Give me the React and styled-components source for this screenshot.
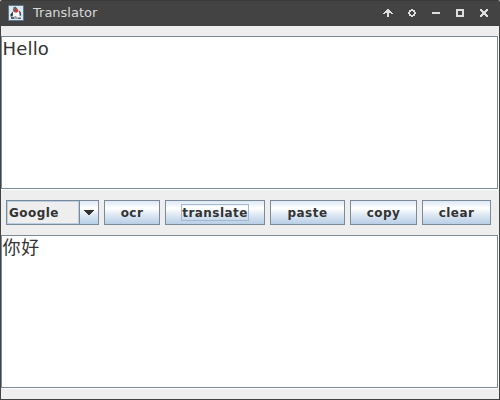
import React from "react";
import styled, { createGlobalStyle } from "styled-components";

const GlobalStyle = createGlobalStyle`
  *, *::before, *::after { box-sizing: border-box; }
  body { margin: 0; overflow: hidden; background: #ffffff; }
`;

const Window = styled.div`
  display: flex;
  flex-direction: column;
  width: 500px;
  height: 400px;
  background: #eeeeee;
  border: 1px solid #434343;
  border-top: 0;
  border-radius: 2px 2px 0 0;
  overflow: hidden;
  color: #333333;
  font-family: "DejaVu Sans", "Noto Sans CJK SC", sans-serif;
`;

const TitleBar = styled.header`
  display: flex;
  align-items: center;
  flex: 0 0 26px;
  padding: 0 11px 0 7px;
  background: #434343;
  box-shadow: inset 0 1px #3b3b3b;
`;

const Title = styled.h1`
  flex: 1;
  margin: 0 0 0 9px;
  color: #d8d8d8;
  font-size: 13px;
  font-weight: 400;
  line-height: 16px;
`;

const WindowControls = styled.div`
  display: flex;
  gap: 16px;
  svg { display: block; overflow: visible; }
`;

const TextPane = styled.section`
  flex: 0 0 154px;
  margin-top: 10px;
  padding: 0 1px 1px 0;
  background: #ffffff;
`;

const TextSurface = styled.div`
  height: 153px;
  padding: 1px 0 0 0.6px;
  border: 1px solid #7a8a99;
  font-size: 18px;
  letter-spacing: ${(p) => p.$tracking}px;
  line-height: 22px;
`;

const Toolbar = styled.div`
  display: flex;
  flex: 0 0 25px;
  gap: 5px;
  margin-top: 10px;
  padding-left: 5px;
  font-size: 12px;
  font-weight: 700;
`;

const metalGradient = "linear-gradient(#dde8f3 0%, #ffffff 30%, #ffffff 33%, #dde8f3 60%, #b8cfe5 100%)";

const EngineSelect = styled.div`
  display: flex;
  width: 93px;
  height: 25px;
  border: 1px solid #7a8a99;
`;

const EngineName = styled.span`
  flex: 1;
  padding-left: 1px;
  border: 1px solid #b8cfe5;
  line-height: 22px;
  letter-spacing: 0.45px;
`;

const SelectArrow = styled.span`
  display: flex;
  align-items: center;
  justify-content: center;
  width: 19px;
  border-left: 1px solid #7a8a99;
  background: ${metalGradient};
`;

const Button = styled.button`
  display: flex;
  align-items: center;
  justify-content: center;
  width: ${(p) => p.$width}px;
  height: 25px;
  padding: 0;
  border: 1px solid #7a8a99;
  background: ${metalGradient};
  color: #333333;
  font: inherit;
`;

const ButtonLabel = styled.span`
  height: 17px;
  border: 1px solid ${(p) => (p.$focused ? "#a3b8cc" : "transparent")};
  line-height: 17px;
  letter-spacing: 0.45px;
`;

const actions = [
  { label: "ocr", width: 56 },
  { label: "translate", width: 100, focused: true },
  { label: "paste", width: 75 },
  { label: "copy", width: 67 },
  { label: "clear", width: 69 },
];

function DukeIcon() {
  return (
    <svg width="16" height="16" viewBox="0 0 16 16">
      <rect width="16" height="16" rx="0.5" fill="#587a94" />
      <rect x="1" y="1" width="14" height="14" fill="#dce8ef" />
      <path d="M6 2L7.5 1.7L9 3L11 6L12 9V13H5L4 10L5.5 6Z" fill="#f7f7f7" />
      <path d="M5.5 2.2L7.5 1.6L9 3.2L10.7 6.5L8 7.5L5.5 7L5 5Z" fill="#63686c" />
      <path d="M4.8 6.5L2.5 9.5L2.6 11.5H4.6L5 9Z" fill="#303941" />
      <path d="M10.8 5.5L12.7 7L13.3 10L11.8 11.5L11.4 8.5Z" fill="#465159" />
      <path d="M3 12H5.5L7.5 11.3L10 12.4H13V14H3Z" fill="#59656e" />
      <path d="M6 12.5H10V13.4H6Z" fill="#e5e8ea" />
      <circle cx="8.4" cy="5.8" r="1.7" fill="#e8292e" />
    </svg>
  );
}

function ControlIcon({ children }) {
  return (
    <svg width="8" height="8" viewBox="0 0 8 8" fill="#dedede" fillRule="evenodd" shapeRendering="crispEdges">
      {children}
    </svg>
  );
}

export default function App() {
  return (
    <>
      <GlobalStyle />
      <Window>
        <TitleBar>
          <DukeIcon />
          <Title>Translator</Title>
          <WindowControls>
            <ControlIcon>
              <path d="M3 0h2v1h1v1h1v1h1v1h1v1H7V4H5v4H3V4H1v1H-1V4H0V3h1V2h1V1h1z" />
            </ControlIcon>
            <ControlIcon>
              <path d="M3 0h2v1h2v2h1v2H7v2H5v1H3V7H1V5H0V3h1V1h2zM3 2v1H2v2h1v1h2V5h1V3H5V2z" />
            </ControlIcon>
            <ControlIcon><path d="M0 3h8v2H0z" /></ControlIcon>
            <ControlIcon><path d="M0 0h8v8H0zM2 2v4h4V2z" /></ControlIcon>
            <ControlIcon>
              <path d="M0 0h2v1h1v1h2V1h1V0h2v2H7v1H6v2h1v1h1v2H6V7H5V6H3v1H2v1H0V6h1V5h1V3H1V2H0z" />
            </ControlIcon>
          </WindowControls>
        </TitleBar>
        <TextPane><TextSurface $tracking={0.15}>Hello</TextSurface></TextPane>
        <Toolbar>
          <EngineSelect>
            <EngineName>Google</EngineName>
            <SelectArrow>
              <svg width="10" height="5" viewBox="0 0 10 5" fill="#333333" shapeRendering="crispEdges">
                <path d="M0 0h10v1H9v1H8v1H7v1H6v1H4V4H3V3H2V2H1V1H0z" />
              </svg>
            </SelectArrow>
          </EngineSelect>
          {actions.map((action) => (
            <Button key={action.label} $width={action.width}>
              <ButtonLabel $focused={action.focused}>{action.label}</ButtonLabel>
            </Button>
          ))}
        </Toolbar>
        <TextPane><TextSurface $tracking={0.7}>你好</TextSurface></TextPane>
      </Window>
    </>
  );
}
